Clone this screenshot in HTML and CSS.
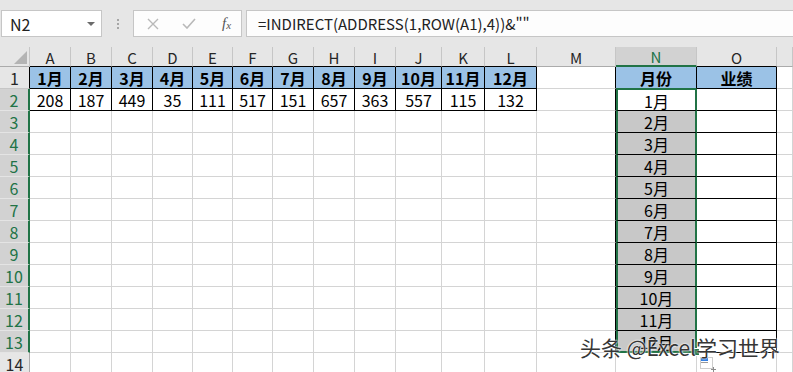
FILE: index.html
```html
<!DOCTYPE html>
<html lang="zh">
<head>
<meta charset="utf-8">
<title>Excel</title>
<link rel="stylesheet" href="styles.css">
</head>
<body>
<div class="app">
  <div class="top">
    <div class="namebox"><span class="nb-text">N2</span><span class="nb-arrow"></span></div>
    <div class="dots"><i></i><i></i><i></i></div>
    <div class="btns">
      <svg class="ic-x" width="12" height="12" viewBox="0 0 12 12"><path d="M1 1L11 11M11 1L1 11" stroke="#b9b9b9" stroke-width="1.4" fill="none"/></svg>
      <svg class="ic-ok" width="14" height="11" viewBox="0 0 14 11"><path d="M1 6L5 10L13 1" stroke="#b9b9b9" stroke-width="1.6" fill="none"/></svg>
      <span class="fx">f<sub>x</sub></span>
    </div>
    <div class="formula">=INDIRECT(ADDRESS(1,ROW(A1),4))&amp;""</div>
  </div>

  <div class="grid">
    <div class="c hc corner"><svg width="13" height="13" viewBox="0 0 13 13"><path d="M13 0V13H0Z" fill="#b4b4b4"/></svg></div>
    <div class="c hc hb">A</div><div class="c hc hb">B</div><div class="c hc hb">C</div><div class="c hc hb">D</div><div class="c hc hb">E</div><div class="c hc hb">F</div><div class="c hc hb">G</div><div class="c hc hb">H</div><div class="c hc hb">I</div><div class="c hc hb">J</div><div class="c hc hb">K</div><div class="c hc hb">L</div><div class="c hc">M</div><div class="c hc hsel">N</div><div class="c hc hb">O</div><div class="c hc"></div>

    <div class="c rh rh1">1</div>
    <div class="c bk blue">1月</div><div class="c bk blue">2月</div><div class="c bk blue">3月</div><div class="c bk blue">4月</div><div class="c bk blue">5月</div><div class="c bk blue">6月</div><div class="c bk blue">7月</div><div class="c bk blue">8月</div><div class="c bk blue">9月</div><div class="c bk blue">10月</div><div class="c bk blue">11月</div><div class="c bk blue">12月</div>
    <div class="c bkr"></div><div class="c bk blue n1">月份</div><div class="c bk blue">业绩</div><div class="c"></div>

    <div class="c rh rhs">2</div>
    <div class="c bk">208</div><div class="c bk">187</div><div class="c bk">449</div><div class="c bk">35</div><div class="c bk">111</div><div class="c bk">517</div><div class="c bk">151</div><div class="c bk">657</div><div class="c bk">363</div><div class="c bk">557</div><div class="c bk">115</div><div class="c bk">132</div>
    <div class="c bkr"></div><div class="c bk sel selt">1月</div><div class="c bk"></div><div class="c"></div>

    <div class="c rh rhs">3</div>
    <div class="c"></div><div class="c"></div><div class="c"></div><div class="c"></div><div class="c"></div><div class="c"></div><div class="c"></div><div class="c"></div><div class="c"></div><div class="c"></div><div class="c"></div><div class="c"></div>
    <div class="c bkr"></div><div class="c bk sel gray">2月</div><div class="c bk"></div><div class="c"></div>

    <div class="c rh rhs">4</div>
    <div class="c"></div><div class="c"></div><div class="c"></div><div class="c"></div><div class="c"></div><div class="c"></div><div class="c"></div><div class="c"></div><div class="c"></div><div class="c"></div><div class="c"></div><div class="c"></div>
    <div class="c bkr"></div><div class="c bk sel gray">3月</div><div class="c bk"></div><div class="c"></div>

    <div class="c rh rhs">5</div>
    <div class="c"></div><div class="c"></div><div class="c"></div><div class="c"></div><div class="c"></div><div class="c"></div><div class="c"></div><div class="c"></div><div class="c"></div><div class="c"></div><div class="c"></div><div class="c"></div>
    <div class="c bkr"></div><div class="c bk sel gray">4月</div><div class="c bk"></div><div class="c"></div>

    <div class="c rh rhs">6</div>
    <div class="c"></div><div class="c"></div><div class="c"></div><div class="c"></div><div class="c"></div><div class="c"></div><div class="c"></div><div class="c"></div><div class="c"></div><div class="c"></div><div class="c"></div><div class="c"></div>
    <div class="c bkr"></div><div class="c bk sel gray">5月</div><div class="c bk"></div><div class="c"></div>

    <div class="c rh rhs">7</div>
    <div class="c"></div><div class="c"></div><div class="c"></div><div class="c"></div><div class="c"></div><div class="c"></div><div class="c"></div><div class="c"></div><div class="c"></div><div class="c"></div><div class="c"></div><div class="c"></div>
    <div class="c bkr"></div><div class="c bk sel gray">6月</div><div class="c bk"></div><div class="c"></div>

    <div class="c rh rhs">8</div>
    <div class="c"></div><div class="c"></div><div class="c"></div><div class="c"></div><div class="c"></div><div class="c"></div><div class="c"></div><div class="c"></div><div class="c"></div><div class="c"></div><div class="c"></div><div class="c"></div>
    <div class="c bkr"></div><div class="c bk sel gray">7月</div><div class="c bk"></div><div class="c"></div>

    <div class="c rh rhs">9</div>
    <div class="c"></div><div class="c"></div><div class="c"></div><div class="c"></div><div class="c"></div><div class="c"></div><div class="c"></div><div class="c"></div><div class="c"></div><div class="c"></div><div class="c"></div><div class="c"></div>
    <div class="c bkr"></div><div class="c bk sel gray">8月</div><div class="c bk"></div><div class="c"></div>

    <div class="c rh rhs">10</div>
    <div class="c"></div><div class="c"></div><div class="c"></div><div class="c"></div><div class="c"></div><div class="c"></div><div class="c"></div><div class="c"></div><div class="c"></div><div class="c"></div><div class="c"></div><div class="c"></div>
    <div class="c bkr"></div><div class="c bk sel gray">9月</div><div class="c bk"></div><div class="c"></div>

    <div class="c rh rhs">11</div>
    <div class="c"></div><div class="c"></div><div class="c"></div><div class="c"></div><div class="c"></div><div class="c"></div><div class="c"></div><div class="c"></div><div class="c"></div><div class="c"></div><div class="c"></div><div class="c"></div>
    <div class="c bkr"></div><div class="c bk sel gray">10月</div><div class="c bk"></div><div class="c"></div>

    <div class="c rh rhs">12</div>
    <div class="c"></div><div class="c"></div><div class="c"></div><div class="c"></div><div class="c"></div><div class="c"></div><div class="c"></div><div class="c"></div><div class="c"></div><div class="c"></div><div class="c"></div><div class="c"></div>
    <div class="c bkr"></div><div class="c bk sel gray">11月</div><div class="c bk"></div><div class="c"></div>

    <div class="c rh rhs">13</div>
    <div class="c"></div><div class="c"></div><div class="c"></div><div class="c"></div><div class="c"></div><div class="c"></div><div class="c"></div><div class="c"></div><div class="c"></div><div class="c"></div><div class="c"></div><div class="c"></div>
    <div class="c bkr"></div><div class="c bk sel selb gray">12月<span class="handle"></span></div><div class="c bk"></div><div class="c"></div>

    <div class="c rh">14</div>
    <div class="c"></div><div class="c"></div><div class="c"></div><div class="c"></div><div class="c"></div><div class="c"></div><div class="c"></div><div class="c"></div><div class="c"></div><div class="c"></div><div class="c"></div><div class="c"></div>
    <div class="c"></div><div class="c"></div><div class="c"></div><div class="c"></div>
  </div>

  <svg class="qa" width="17" height="15" viewBox="0 0 17 15">
    <rect x="0.5" y="0.5" width="12" height="11" fill="#fff" stroke="#9a9a9a" stroke-dasharray="1 1"/>
    <rect x="1" y="1" width="7" height="3" fill="#2f7be0"/>
    <rect x="1" y="5" width="7" height="1" fill="#9a9a9a"/>
    <path d="M13.5 10V15M11 12.5H16" stroke="#8a8a8a" stroke-width="1"/>
  </svg>
  <div class="wm">头条 @Excel学习世界</div>
</div>
</body>
</html>
```

FILE: styles.css
```css
html, body {
  margin: 0;
  padding: 0;
  background: #fff;
  overflow: hidden;
}

.app {
  position: relative;
  width: 793px;
  height: 372px;
  overflow: hidden;
  font-family: "Noto Sans CJK SC", sans-serif;
}

/* ---------- formula bar ---------- */
.top {
  height: 47px;
  box-sizing: border-box;
  padding-top: 10px;
  background: #e6e6e6;
  display: flex;
  align-items: flex-start;
}

.namebox {
  margin-left: 1px;
  width: 101px;
  height: 27px;
  box-sizing: border-box;
  border: 1px solid #c6c6c6;
  background: #fff;
  display: flex;
  align-items: center;
  justify-content: space-between;
  padding: 0 6px 0 8px;
}

.nb-text {
  font: 16px/1 "Noto Sans CJK SC", sans-serif;
  color: #222;
}

.nb-arrow {
  width: 0;
  height: 0;
  border-left: 4px solid transparent;
  border-right: 4px solid transparent;
  border-top: 4px solid #6b6b6b;
}

.dots {
  width: 31px;
  height: 27px;
  display: flex;
  flex-direction: column;
  align-items: center;
  justify-content: center;
  gap: 2px;
}

.dots i {
  display: block;
  width: 2px;
  height: 2px;
  background: #a6a6a6;
}

.btns {
  width: 109px;
  height: 27px;
  box-sizing: border-box;
  border: 1px solid #c6c6c6;
  background: #fdfdfd;
  display: flex;
  align-items: center;
  padding-left: 13px;
}

.ic-x { margin-right: 23px; }
.ic-ok { margin-right: 26px; }

.fx {
  font: italic 15px/1 "Liberation Serif", serif;
  color: #555;
}

.fx sub {
  font-size: 11px;
  vertical-align: -1px;
}

.formula {
  margin-left: 4px;
  flex: 1;
  height: 27px;
  box-sizing: border-box;
  border: 1px solid #c6c6c6;
  border-right: none;
  background: #fdfdfd;
  padding-left: 11px;
  display: flex;
  align-items: center;
  font: 15px/1 "Noto Sans CJK SC", sans-serif;
  color: #222;
  white-space: nowrap;
}

/* ---------- sheet grid ---------- */
.grid {
  display: grid;
  grid-template-columns: 30px 41px 41px 41px 40px 40px 40px 41px 41px 41px 46px 43px 52px 79px 81px 80px 16px;
  grid-template-rows: 20px repeat(14, 22px);
}

.c {
  position: relative;
  box-sizing: border-box;
  border-right: 1px solid #d4d4d4;
  border-bottom: 1px solid #d4d4d4;
  background: #fff;
  display: flex;
  align-items: center;
  justify-content: center;
  font-size: 16px;
  line-height: 1;
  color: #000;
  white-space: nowrap;
  padding-top: 1px;
}

.hc {
  background: #e6e6e6;
  border-right-color: #c6c6c6;
  border-bottom-color: #ababab;
  color: #262626;
  font-size: 15px;
}

.hb { border-bottom-color: #000; }

.hsel {
  background: #d2d2d2;
  color: #217346;
  border-bottom: 2px solid #217346;
}

.corner {
  justify-content: flex-end;
  align-items: flex-end;
  padding: 0 2px 2px 0;
}

.rh {
  background: #e6e6e6;
  border-right-color: #ababab;
  border-bottom-color: #c6c6c6;
  color: #262626;
}

.rh1 { border-right-color: #000; }

.rhs {
  background: #d2d2d2;
  color: #217346;
  border-right: 2px solid #217346;
  border-bottom-color: #e4e4e4;
}

.bk {
  border-right-color: #000;
  border-bottom-color: #000;
}

.bkr { border-right-color: #000; }

.blue {
  background: #9bc2e6;
  font-weight: bold;
}

.n1 { border-bottom-color: #217346; }

.sel {
  border-left: 2px solid #217346;
  border-right: 2px solid #217346;
}

.selt { border-top: 1px solid #217346; }
.selb { border-bottom: 2px solid #217346; }

.gray { background: #c8c8c8; }

.handle {
  position: absolute;
  right: -5px;
  bottom: -5px;
  width: 6px;
  height: 6px;
  background: #217346;
  border: 1px solid #fff;
  z-index: 2;
}

/* ---------- overlays ---------- */
.qa {
  position: absolute;
  left: 700px;
  top: 357px;
}

.wm {
  position: absolute;
  left: 580px;
  top: 335px;
  font: 21px/1.2 "Noto Sans CJK SC", sans-serif;
  color: #363636;
  text-shadow: 0 0 2px #fff, 0 0 2px #fff;
  white-space: nowrap;
  z-index: 5;
}
```
